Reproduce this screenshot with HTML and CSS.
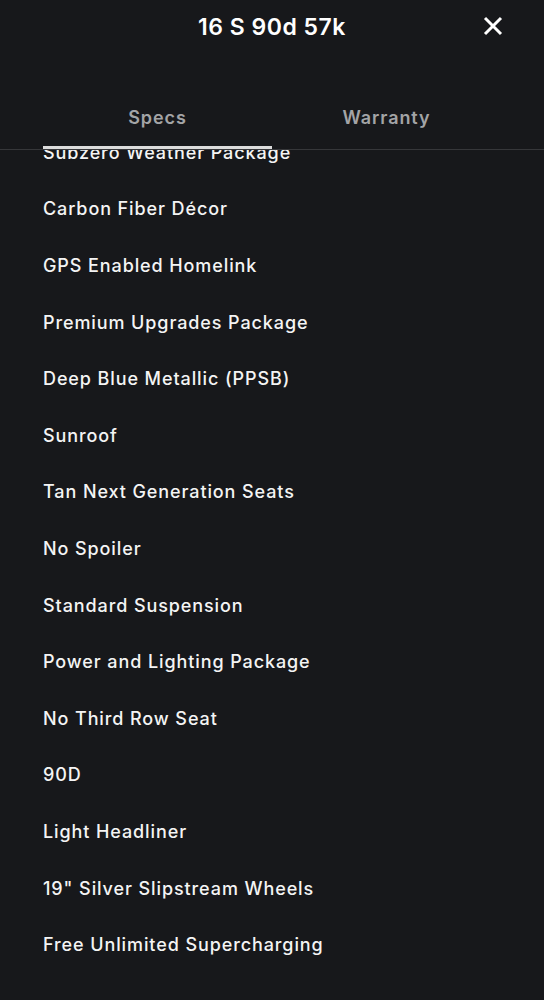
FILE: index.html
```html
<!DOCTYPE html>
<html lang="en">
<head>
<meta charset="utf-8">
<link rel="stylesheet" href="styles.css">
</head>
<body>
<div class="sheet">
  <header class="top">
    <h1 class="title">16 S 90d 57k</h1>
    <button class="close" aria-label="Close">
      <svg width="20" height="20" viewBox="0 0 20 20"><path d="M2 2L18 18M18 2L2 18" stroke="#fff" stroke-width="3" stroke-linecap="butt"/></svg>
    </button>
  </header>
  <nav class="tabs">
    <div class="tab active">Specs</div>
    <div class="tab">Warranty</div>
  </nav>
  <div class="scroller">
    <ul class="list">
      <li>Subzero Weather Package</li>
      <li>Carbon Fiber Décor</li>
      <li>GPS Enabled Homelink</li>
      <li>Premium Upgrades Package</li>
      <li>Deep Blue Metallic (PPSB)</li>
      <li>Sunroof</li>
      <li>Tan Next Generation Seats</li>
      <li>No Spoiler</li>
      <li>Standard Suspension</li>
      <li>Power and Lighting Package</li>
      <li>No Third Row Seat</li>
      <li>90D</li>
      <li>Light Headliner</li>
      <li>19" Silver Slipstream Wheels</li>
      <li>Free Unlimited Supercharging</li>
    </ul>
  </div>
</div>
</body>
</html>
```
FILE: styles.css
```css
* { box-sizing: border-box; }
html, body { margin: 0; padding: 0; background: #17181b; }
body { font-family: Inter, "Liberation Sans", sans-serif; color: #fff; }
.sheet { width: 544px; height: 1000px; display: flex; flex-direction: column; overflow: hidden; }
.top { position: relative; height: 54px; display: flex; align-items: center; justify-content: center; }
.title { margin: 0; font-size: 23px; font-weight: 600; letter-spacing: 0.5px; }
.close { position: absolute; right: 41px; top: 16px; background: none; border: 0; padding: 0; width: 20px; height: 20px; display: block; }
.close svg { display: block; }
.tabs { margin-top: 42px; padding: 0 43px; display: grid; grid-template-columns: 1fr 1fr; height: 54px; border-bottom: 1px solid #36373a; }
.tab { display: flex; align-items: center; justify-content: center; font-size: 18px; font-weight: 600; color: #a3a4a6; position: relative; padding-bottom: 10px; letter-spacing: 0.9px; }
.tab.active::after { content: ""; position: absolute; left: 0; right: 0; bottom: 0; height: 3px; background: #dcdcdc; z-index: 2; }
.scroller { flex: 1; overflow: hidden; }
.list { list-style: none; margin: -26px 0 0; padding: 0 43px; }
.list li { height: 56.6px; display: flex; align-items: center; font-size: 18px; font-weight: 500; color: #f4f4f4; letter-spacing: 0.9px; }
```
